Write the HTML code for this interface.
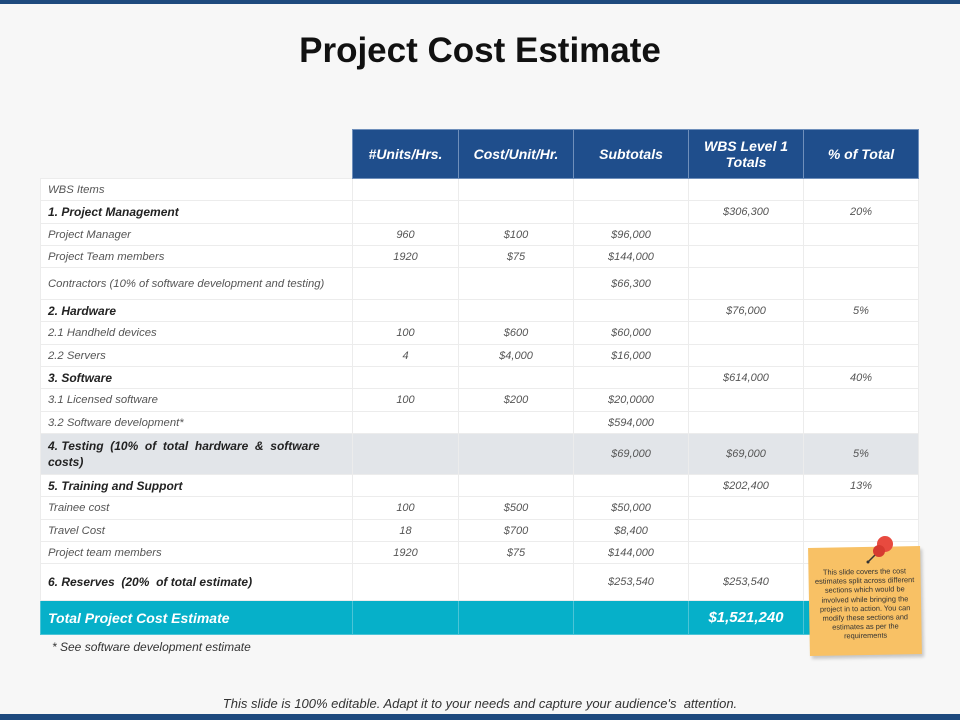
<!DOCTYPE html>
<html><head><meta charset="utf-8"><style>
*{margin:0;padding:0;box-sizing:border-box}
body{width:960px;height:720px;position:relative;overflow:hidden;background:#f7f7f7;font-family:"Liberation Sans",sans-serif}
.top{position:absolute;left:0;top:0;width:960px;height:4px;background:#1e4a7e}
.bot{position:absolute;left:0;top:714px;width:960px;height:6px;background:#1e4a7e}
h1{position:absolute;left:0;width:960px;top:31px;text-align:center;font-size:35px;font-weight:bold;color:#111}
table{position:absolute;left:40px;top:129px;border-collapse:collapse;table-layout:fixed;width:878px}
td{border:1px solid #ececec;background:#fff;font-size:11px;font-style:italic;color:#555;text-align:center;padding:0 7px;height:22px;line-height:12px}
td:first-child{text-align:left;font-size:11.3px}
tr.h td{background:#1f4e8c;color:#fff;font-weight:bold;font-size:14px;border:1px solid #6f8fbb;height:49px;line-height:16px}
tr.h td:first-child{background:transparent;border:none}
tr.b td:first-child{font-weight:bold;color:#222;font-size:12px}
tr.g td{background:#e2e5e9}
tr.t td{background:#06b0c9;color:#fff;font-weight:bold;font-size:15px;height:34px;border-color:#4cc4d6}
.foot{position:absolute;left:52px;top:640px;font-size:12px;font-style:italic;color:#333}
.bottom{position:absolute;left:0;width:960px;top:696px;text-align:center;font-size:13px;font-style:italic;color:#333}
.note{position:absolute;left:809px;top:547px;width:112px;height:108px;background:#f8c165;transform:rotate(-1deg);box-shadow:2px 3px 3px rgba(0,0,0,.2);font-size:7.4px;line-height:9.2px;color:#333;text-align:center;padding:20px 6px 0}
</style></head><body>
<div class="top"></div>
<h1>Project Cost Estimate</h1>
<table>
<colgroup><col style="width:312px"><col style="width:106px"><col style="width:115px"><col style="width:115px"><col style="width:115px"><col style="width:115px"></colgroup>
<tr class="h"><td></td><td>#Units/Hrs.</td><td>Cost/Unit/Hr.</td><td>Subtotals</td><td>WBS Level 1 Totals</td><td>% of Total</td></tr>
<tr><td>WBS Items</td><td></td><td></td><td></td><td></td><td></td></tr>
<tr class="b" style="height:23px"><td>1. Project Management</td><td></td><td></td><td></td><td>$306,300</td><td>20%</td></tr>
<tr><td>Project Manager</td><td>960</td><td>$100</td><td>$96,000</td><td></td><td></td></tr>
<tr><td>Project Team members</td><td>1920</td><td>$75</td><td>$144,000</td><td></td><td></td></tr>
<tr><td style="height:32px">Contractors (10% of software development and testing)</td><td></td><td></td><td>$66,300</td><td></td><td></td></tr>
<tr class="b"><td>2. Hardware</td><td></td><td></td><td></td><td>$76,000</td><td>5%</td></tr>
<tr><td style="height:23px">2.1 Handheld devices</td><td>100</td><td>$600</td><td>$60,000</td><td></td><td></td></tr>
<tr><td>2.2 Servers</td><td>4</td><td>$4,000</td><td>$16,000</td><td></td><td></td></tr>
<tr class="b"><td>3. Software</td><td></td><td></td><td></td><td>$614,000</td><td>40%</td></tr>
<tr><td style="height:23px">3.1 Licensed software</td><td>100</td><td>$200</td><td>$20,0000</td><td></td><td></td></tr>
<tr><td>3.2 Software development*</td><td></td><td></td><td>$594,000</td><td></td><td></td></tr>
<tr class="b g"><td style="height:41px;line-height:16px">4. Testing&nbsp; (10%&nbsp; of&nbsp; total&nbsp; hardware&nbsp; &amp;&nbsp; software<br>costs)</td><td></td><td></td><td>$69,000</td><td>$69,000</td><td>5%</td></tr>
<tr class="b"><td>5. Training and Support</td><td></td><td></td><td></td><td>$202,400</td><td>13%</td></tr>
<tr><td style="height:23px">Trainee cost</td><td>100</td><td>$500</td><td>$50,000</td><td></td><td></td></tr>
<tr><td>Travel Cost</td><td>18</td><td>$700</td><td>$8,400</td><td></td><td></td></tr>
<tr><td>Project team members</td><td>1920</td><td>$75</td><td>$144,000</td><td></td><td></td></tr>
<tr class="b"><td style="height:37px">6. Reserves&nbsp; (20%&nbsp; of total estimate)</td><td></td><td></td><td>$253,540</td><td>$253,540</td><td></td></tr>
<tr class="t"><td style="font-size:14px">Total Project Cost Estimate</td><td></td><td></td><td></td><td>$1,521,240</td><td></td></tr>
</table>
<div class="foot">* See software development estimate</div>
<div class="note">This slide covers the cost estimates split across different sections which would be involved while bringing the project in to action. You can modify these sections and estimates as per the requirements</div>
<svg style="position:absolute;left:860px;top:532px" width="40" height="40" viewBox="0 0 40 40">
<line x1="8" y1="30" x2="17" y2="21" stroke="#333" stroke-width="1.5"/>
<circle cx="8" cy="30" r="1.5" fill="#333"/>
<circle cx="25" cy="12" r="8" fill="#e84a3f"/>
<circle cx="19" cy="19" r="6" fill="#d63a30"/>
</svg>
<div class="bottom">This slide is 100% editable. Adapt it to your needs and capture your audience's&nbsp; attention.</div>
<div class="bot"></div>
</body></html>
